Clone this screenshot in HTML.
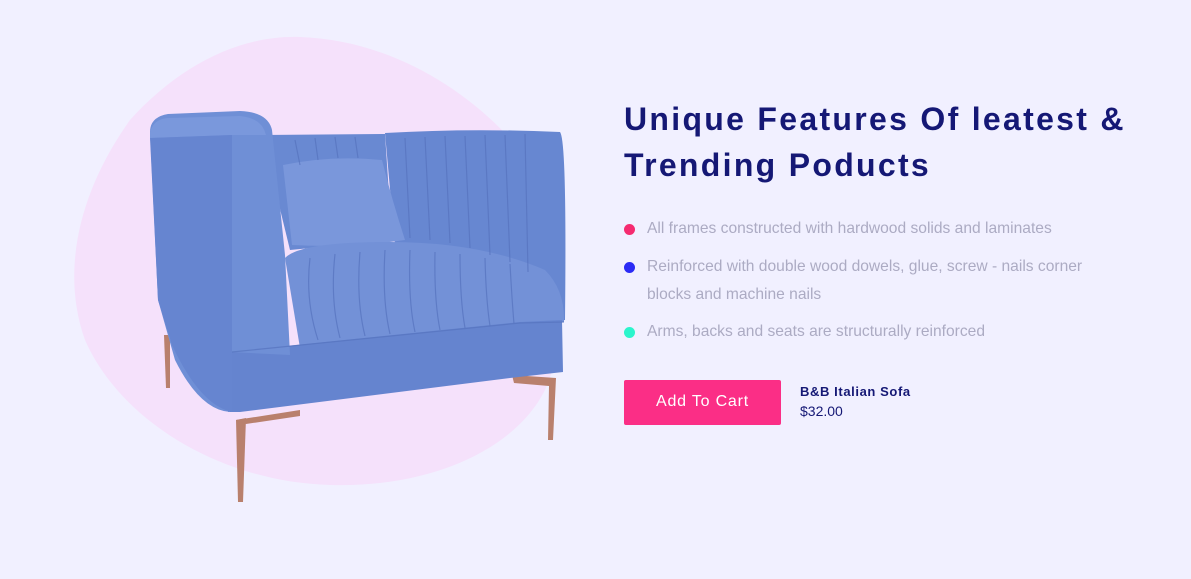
<!DOCTYPE html>
<html><head><meta charset="utf-8"><style>
*{margin:0;padding:0;box-sizing:border-box}
body{width:1191px;height:579px;background:#f1f0ff;position:relative;overflow:hidden;font-family:"Liberation Sans",sans-serif}
h1{position:absolute;left:624px;top:96px;font-size:32px;line-height:46px;color:#151875;font-weight:bold;letter-spacing:2.3px;width:600px}
.li{position:absolute;left:624px;font-size:15.6px;color:#acabc3;line-height:28px}
.li i{position:absolute;left:0;top:9px;width:11px;height:11px;border-radius:50%}
.li span{display:block;padding-left:23px;width:490px}
.btn{position:absolute;left:624px;top:380px;width:157px;height:45px;background:#fb2e86;color:#fff;font-size:16px;text-align:center;line-height:44px;border-radius:2px;letter-spacing:0.8px}
.n{position:absolute;left:800px;top:384px;font-size:13px;color:#151875;font-weight:bold;letter-spacing:0.6px}
.p{position:absolute;left:800px;top:403px;font-size:14px;color:#151875}
</style></head><body>
<svg width="600" height="579" style="position:absolute;left:0;top:0">
<path d="M300 37 C390 40 470 90 520 150 C570 220 575 320 545 390 C515 450 430 488 330 485 C220 482 120 420 85 340 C60 270 80 190 130 120 C180 65 240 35 300 37Z" fill="#f5e1fb"/>
<g fill="#b9806d">
<polygon points="164,335 170,335 170,388 166,388"/>
<polygon points="236,420 246,418 243,502 238,502"/>
<polygon points="236,420 300,410 300,416 246,424"/>
<polygon points="512,375 556,378 553,440 548,440 549,386 514,383"/>
</g>
<!-- right arm/back -->
<path d="M385 133 Q470 128 560 132 Q567 140 565 320 L520 325 L520 270 L395 245Z" fill="#6787d1"/>
<!-- back -->
<path d="M262 135 L385 134 L392 240 L290 250Z" fill="#6989d2"/>
<!-- pillow -->
<path d="M283 165 Q330 155 382 160 Q392 200 405 240 Q350 248 292 245 Z" fill="#7a97db"/>
<!-- seat -->
<path d="M285 258 Q300 242 390 242 Q480 242 545 270 Q565 290 564 322 L300 348 Z" fill="#7391d7"/>
<!-- base front -->
<path d="M228 352 L520 322 L562 320 L563 372 L510 378 L240 412 L228 412Z" fill="#6584cf"/>
<!-- left arm -->
<path d="M150 132 Q150 117 168 114 L240 111 Q268 112 272 130 L285 255 L290 355 L230 352 L230 412 Q200 410 175 360 L158 300 Z" fill="#6f8fd6"/>
<path d="M150 132 Q154 118 170 118 L240 116 Q262 118 266 135 L232 135 L150 138Z" fill="#7a98dc"/>
<path d="M150 138 L232 135 L232 412 Q200 405 172 345 L158 300Z" fill="#6685d0"/>
<g stroke="#5673be" stroke-width="1.2" fill="none" opacity=".7">
<path d="M310 258 Q305 300 318 340 M335 254 Q330 300 340 338 M360 252 Q356 300 365 336 M385 250 Q382 300 390 334 M410 250 Q408 300 415 332 M435 252 Q434 300 440 330 M460 254 Q460 300 465 328 M485 258 Q486 300 490 326 M510 264 Q512 300 514 324"/>
<path d="M405 138 L410 238 M425 137 L430 240 M445 136 L450 243 M465 136 L470 248 M485 135 L490 255 M505 135 L510 262 M525 134 L528 272"/>
<path d="M295 140 L300 165 M315 138 L318 160 M335 137 L338 158 M355 137 L358 158"/>
<path d="M232 352 L520 323 L564 322"/>
</g>
</svg>
<h1>Unique Features Of leatest &amp;<br>Trending Poducts</h1>
<div class="li" style="top:215px"><i style="background:#f52b70"></i><span>All frames constructed with hardwood solids and laminates</span></div>
<div class="li" style="top:253px"><i style="background:#2b2bf5"></i><span>Reinforced with double wood dowels, glue, screw - nails corner blocks and machine nails</span></div>
<div class="li" style="top:318px"><i style="background:#2bf5cc"></i><span>Arms, backs and seats are structurally reinforced</span></div>
<div class="btn">Add To Cart</div>
<div class="n">B&amp;B Italian Sofa</div>
<div class="p">$32.00</div>
</body></html>
